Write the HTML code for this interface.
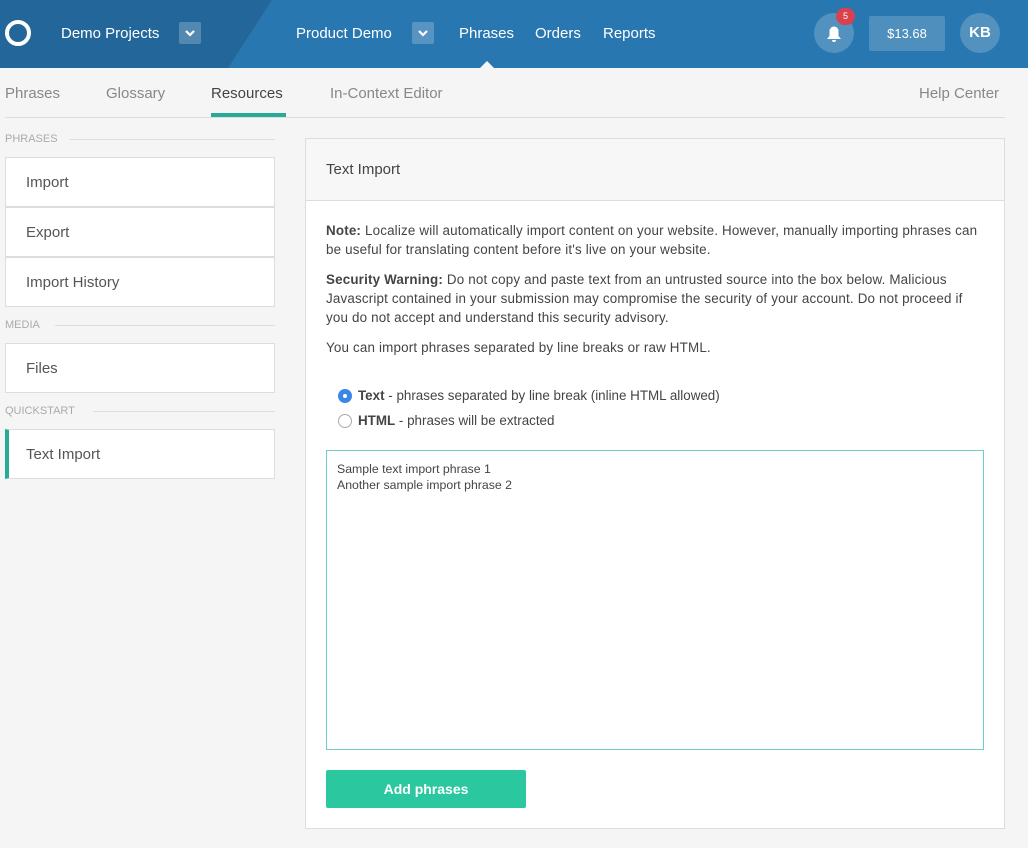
<!DOCTYPE html><html><head><style>
*{box-sizing:border-box;margin:0;padding:0}
body{width:1028px;height:848px;background:#f5f5f5;font-family:"Liberation Sans",sans-serif;color:#444;position:relative;overflow:hidden}
.a{position:absolute}
.hd{left:0;top:0;width:1028px;height:68px;background:#2877b0}
.hdl{left:0;top:0;width:272px;height:68px;background:#23679a;clip-path:polygon(0 0,100% 0,228px 100%,0 100%)}
.w{color:#fff;font-size:15px}
.dd{width:22px;height:22px;background:rgba(255,255,255,.22);border-radius:2px}
.tab{font-size:15px;color:#888;top:85px}
.lab{font-size:11px;color:#aaa;left:5px}
.ln{height:1px;background:#ddd}
.box{left:5px;width:270px;height:50px;background:#fff;border:1px solid #ddd;font-size:15px;color:#555;padding:16px 0 0 20px}
.p{font-size:13.4px;line-height:19px;color:#444;white-space:nowrap}
.q{letter-spacing:0.17px}
</style></head><body>
<div class="a hd"></div><div class="a hdl"></div>
<div class="a" style="left:5px;top:20px;width:26px;height:26px;border:4px solid #fff;border-radius:50%"></div>
<div class="a w" style="left:61px;top:25px">Demo Projects</div>
<div class="a dd" style="left:179px;top:22px"><svg width="22" height="22"><path d="M7 9l4 4 4-4" stroke="#fff" stroke-width="2.2" fill="none"/></svg></div>
<div class="a w" style="left:296px;top:25px">Product Demo</div>
<div class="a dd" style="left:412px;top:22px"><svg width="22" height="22"><path d="M7 9l4 4 4-4" stroke="#fff" stroke-width="2.2" fill="none"/></svg></div>
<div class="a w" style="left:459px;top:25px">Phrases</div>
<div class="a w" style="left:535px;top:25px">Orders</div>
<div class="a w" style="left:603px;top:25px">Reports</div>
<div class="a" style="left:480px;top:61px;width:0;height:0;border-left:7px solid transparent;border-right:7px solid transparent;border-bottom:7px solid #f5f5f5"></div>
<div class="a" style="left:814px;top:13px;width:40px;height:40px;border-radius:50%;background:rgba(255,255,255,.2)"><svg width="40" height="40"><path d="M13 26h14l-2.5-3v-5a4.5 4.5 0 0 0-9 0v5z M18 27a2 2 0 0 0 4 0z" fill="#fff"/></svg></div>
<div class="a" style="left:836px;top:8px;width:19px;height:17px;border-radius:9px;background:#d9414f;color:#fff;font-size:9px;text-align:center;line-height:17px">5</div>
<div class="a" style="left:869px;top:16px;width:76px;height:35px;background:rgba(255,255,255,.18);border-radius:2px;color:#fff;font-size:13px;text-align:center;line-height:35px">$13.68</div>
<div class="a" style="left:960px;top:13px;width:40px;height:40px;border-radius:50%;background:rgba(255,255,255,.2);color:#fff;font-weight:bold;font-size:15px;text-align:center;line-height:40px">KB</div>
<div class="a tab" style="left:5px">Phrases</div>
<div class="a tab" style="left:106px">Glossary</div>
<div class="a tab" style="left:211px;color:#444">Resources</div>
<div class="a" style="left:211px;top:113px;width:75px;height:4px;background:#26ab98"></div>
<div class="a tab" style="left:330px">In-Context Editor</div>
<div class="a tab" style="left:919px">Help Center</div>
<div class="a ln" style="left:5px;top:117px;width:1000px"></div>
<div class="a lab" style="top:133px">PHRASES</div><div class="a ln" style="left:70px;top:139px;width:205px"></div>
<div class="a box" style="top:157px">Import</div>
<div class="a box" style="top:207px">Export</div>
<div class="a box" style="top:257px">Import History</div>
<div class="a lab" style="top:319px">MEDIA</div><div class="a ln" style="left:55px;top:325px;width:220px"></div>
<div class="a box" style="top:343px">Files</div>
<div class="a lab" style="top:405px">QUICKSTART</div><div class="a ln" style="left:93px;top:411px;width:182px"></div>
<div class="a box" style="top:429px;border-left:4px solid #26ab98;padding-left:17px">Text Import</div>
<div class="a" style="left:305px;top:138px;width:700px;height:691px;background:#fff;border:1px solid #ddd">
<div style="height:62px;background:#f7f7f7;border-bottom:1px solid #ddd;font-size:15px;padding:22px 0 0 20px;color:#444">Text Import</div>
<div style="padding:20px 20px 0 20px">
<p class="p q"><b>Note:</b> Localize will automatically import content on your website. However, manually importing phrases can<br>be useful for translating content before it's live on your website.</p>
<p class="p q" style="margin-top:11px"><b>Security Warning:</b> Do not copy and paste text from an untrusted source into the box below. Malicious<br>Javascript contained in your submission may compromise the security of your account. Do not proceed if<br>you do not accept and understand this security advisory.</p>
<p class="p q" style="margin-top:11px">You can import phrases separated by line breaks or raw HTML.</p>
</div></div>
<div class="a" style="left:338px;top:389px;width:14px;height:14px;border-radius:50%;background:#3b87e8"><div style="margin:5px;width:4px;height:4px;border-radius:50%;background:#fff"></div></div>
<div class="a p" style="left:358px;top:386px"><b>Text</b> - phrases separated by line break (inline HTML allowed)</div>
<div class="a" style="left:338px;top:414px;width:14px;height:14px;border-radius:50%;border:1px solid #aaa"></div>
<div class="a p" style="left:358px;top:411px"><b>HTML</b> - phrases will be extracted</div>
<div class="a" style="left:326px;top:450px;width:658px;height:300px;border:1px solid #6fcfc4;font-size:12.3px;line-height:16px;padding:10px;color:#444">Sample text import phrase 1<br>Another sample import phrase 2</div>
<div class="a" style="left:326px;top:770px;width:200px;height:38px;background:#2bc8a0;border-radius:2px;color:#fff;font-weight:bold;font-size:14px;text-align:center;line-height:38px">Add phrases</div>
</body></html>
